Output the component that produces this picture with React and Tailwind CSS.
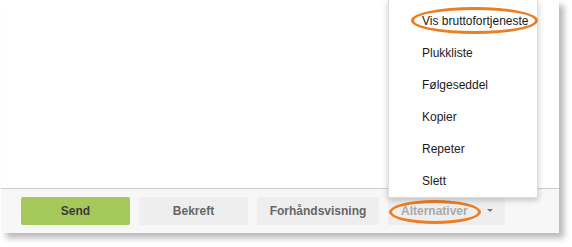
import React from 'react';

const menuItems = ['Vis bruttofortjeneste', 'Plukkliste', 'Følgeseddel', 'Kopier', 'Repeter', 'Slett'];

export default function App() {
  return (
    <div className="w-[572px] h-[247px] bg-white font-['Liberation_Sans',Arial,sans-serif] text-[12px]">
      <div className="relative ml-[1px] w-[558px] shadow-[5px_5px_6px_rgba(0,0,0,0.28)]">
        <div className="h-[188px] bg-white" />
        <div className="flex h-[45px] items-center gap-[9px] border-t border-[#cccccc] bg-[#f7f7f7] pl-[20px]">
          <button className="h-[28px] w-[109px] rounded-[2px] bg-[#a5c85a] font-bold text-[#3b3b3b]">Send</button>
          <button className="h-[28px] w-[109px] rounded-[2px] bg-[#eeeeee] font-bold text-[#666666]">Bekreft</button>
          <button className="h-[28px] w-[122px] rounded-[2px] bg-[#eeeeee] font-bold text-[#666666]">Forhåndsvisning</button>
          <div className="relative flex h-[28px] w-[117px] items-center rounded-[2px] bg-[#eeeeee] pl-[13px]">
            <span className="font-bold text-[#aaaaaa]">Alternativer</span>
            <svg width="6" height="4" viewBox="0 0 6 4" className="ml-[19px]">
              <path d="M0 0h6L3 3z" fill="#777777" />
            </svg>
            <div className="absolute left-[1px] top-[3px] h-[24px] w-[92px] rounded-[50%] border-[3px] border-[#ec7d22]" />
          </div>
        </div>

        <div className="absolute left-[387px] top-0 w-[150px] border border-t-0 border-[#dddddd] bg-white pt-[5px] shadow-[0_2px_6px_rgba(0,0,0,0.22)]">
          {menuItems.map((item) => (
            <div key={item} className="flex h-[32px] items-center pl-[33px] text-[#1a1a1a]">
              {item}
            </div>
          ))}
          <div className="absolute left-[22px] top-[7px] h-[27px] w-[127px] rounded-[50%] border-[3px] border-[#ec7d22]" />
        </div>
      </div>
    </div>
  );
}
